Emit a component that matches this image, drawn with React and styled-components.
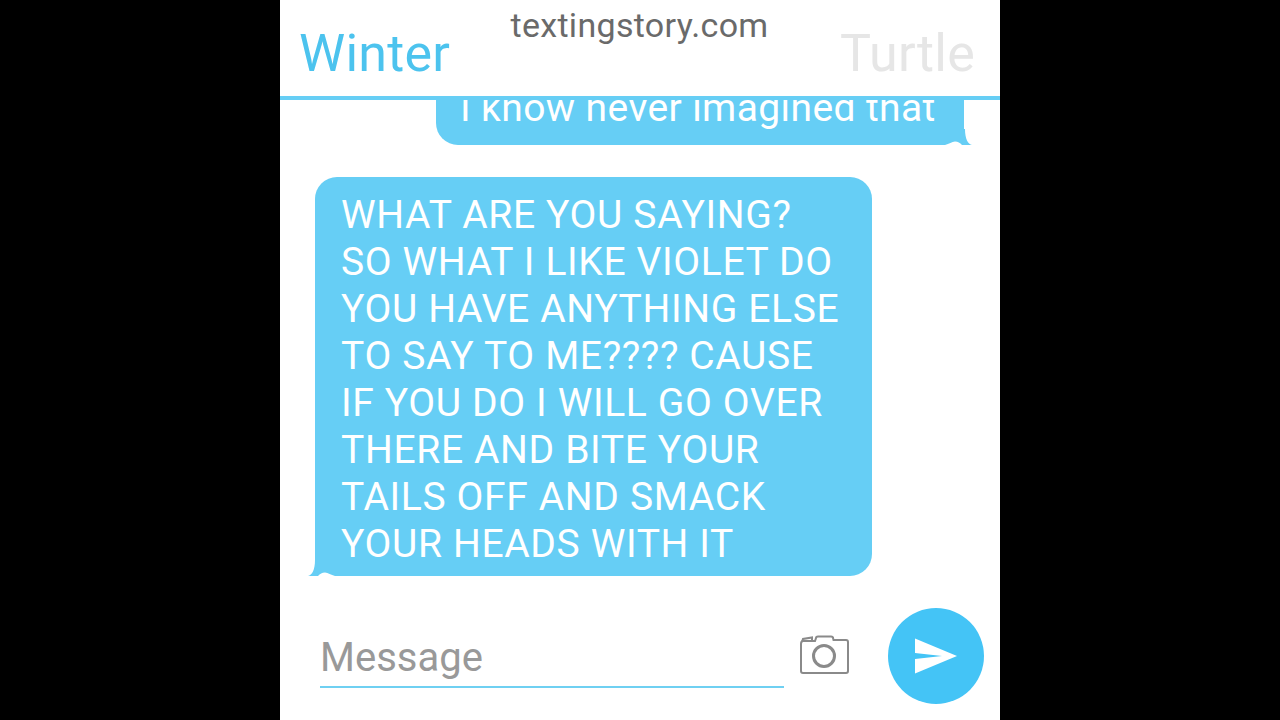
import React from 'react';
import styled, { createGlobalStyle } from 'styled-components';

const GlobalStyle = createGlobalStyle`
  html, body {
    margin: 0;
    padding: 0;
    height: 100%;
    background: #000;
    font-family: Roboto, "Liberation Sans", sans-serif;
  }
`;

const Stage = styled.div`
  display: flex;
  justify-content: center;
  height: 720px;
  background: #000;
`;

const Phone = styled.div`
  position: relative;
  display: flex;
  flex-direction: column;
  width: 720px;
  height: 720px;
  background: #fff;
  overflow: hidden;
`;

const Watermark = styled.div`
  position: absolute;
  top: 6px;
  left: 0;
  right: 1px;
  text-align: center;
  font-size: 34px;
  line-height: 38px;
  letter-spacing: 0.3px;
  color: #6a6a6a;
`;

const Header = styled.header`
  display: flex;
  justify-content: space-between;
  align-items: flex-start;
  flex: none;
  height: 96px;
  padding: 0 25px 0 19px;
  border-bottom: 4px solid #66cef5;
`;

const Tab = styled.div`
  font-size: 52px;
  line-height: 60px;
  letter-spacing: 0.25px;
  margin-top: 24px;
  color: ${(p) => (p.$active ? '#4cc3ee' : '#e6e6e6')};
`;

const Thread = styled.main`
  display: flex;
  flex-direction: column;
  justify-content: flex-end;
  gap: 32px;
  flex: 1;
  min-height: 0;
  overflow: hidden;
  padding: 0 36px 24px 35px;
`;

const Bubble = styled.div`
  position: relative;
  flex: none;
  align-self: ${(p) => (p.$mine ? 'flex-end' : 'flex-start')};
  width: ${(p) => (p.$mine ? '528px' : '557px')};
  box-sizing: border-box;
  padding: ${(p) => (p.$mine ? '13px 20px 13px 24px' : '15px 20px 8px 26px')};
  background: #66cef5;
  border-radius: ${(p) => (p.$mine ? '22px 22px 0 22px' : '22px 22px 22px 0')};
  font-size: 39px;
  line-height: 47px;
  letter-spacing: ${(p) => (p.$mine ? '0.4px' : '0.65px')};
  color: #fff;
  white-space: pre-line;
`;

const TailMark = styled.svg`
  position: absolute;
  bottom: 0;
  width: 30px;
  height: 20px;
  ${(p) => (p.$mine ? 'right: -8px; transform: scaleX(-1);' : 'left: -7px;')}
`;

const Tail = ({ mine }) => (
  <TailMark $mine={mine} viewBox="0 0 30 20">
    <path d="M10 20 C12 18 14 16.500 17 16.500 C20 17 23 19 27 20 Z" fill="#fff" />
    <path d="M0 20 C4 19 7 14 7 4 L9 4 L9 16 C9 18 10 19 10 20 Z" fill="#66cef5" />
  </TailMark>
);

const Composer = styled.footer`
  display: flex;
  align-items: flex-end;
  flex: none;
  height: 120px;
  box-sizing: border-box;
  padding: 0 16px 16px 40px;
`;

const MessageField = styled.div`
  width: 464px;
  height: 64px;
  margin-bottom: 16px;
  box-sizing: border-box;
  border-bottom: 2px solid #6fd0f2;
  font-size: 40px;
  line-height: 67px;
  color: #999;
`;

const CameraIcon = styled.svg`
  flex: none;
  width: 50px;
  height: 40px;
  margin: 0 39px 30px 15px;
`;

const SendButton = styled.div`
  display: flex;
  align-items: center;
  justify-content: center;
  flex: none;
  width: 96px;
  height: 96px;
  border-radius: 50%;
  background: #44c4f6;
`;

export default function App() {
  return (
    <>
      <GlobalStyle />
      <Stage>
        <Phone>
          <Header>
            <Tab $active>Winter</Tab>
            <Tab>Turtle</Tab>
          </Header>
          <Watermark>textingstory.com</Watermark>
          <Thread>
            <Bubble $mine>
              I know never imagined that
              <Tail mine />
            </Bubble>
            <Bubble>
              {'WHAT ARE YOU SAYING?\nSO WHAT I LIKE VIOLET DO\nYOU HAVE ANYTHING ELSE\nTO SAY TO ME???? CAUSE\nIF YOU DO I WILL GO OVER\nTHERE AND BITE YOUR\nTAILS OFF AND SMACK\nYOUR HEADS WITH IT'}
              <Tail />
            </Bubble>
          </Thread>
          <Composer>
            <MessageField>Message</MessageField>
            <CameraIcon viewBox="0 0 50 40" fill="none" stroke="#8a8a8a" strokeWidth="2">
              <path d="M2 10 C2 8 3 7 4 7 L16 7 L17 4 C17 3 18 2.500 19 2.500 L32 2.500 C33 2.500 34 3 34 4 L34.500 6 L47 6 C48.500 6 49 7 49 8 L49 37 C49 38.500 48.500 39 47 39 L4 39 C2.500 39 2 38.500 2 37 Z" />
              <path d="M3 8 L4 5 L13 3.500 L13 7" />
              <circle cx="25" cy="22" r="10.500" strokeWidth="3" />
            </CameraIcon>
            <SendButton>
              <svg width="44" height="38" viewBox="0 0 44 38">
                <path d="M1 1.500 L43 19 L28 19 L1 16 Z" fill="#fff" />
                <path d="M1 36.500 L43 19 L28 19 L1 22 Z" fill="#fff" />
              </svg>
            </SendButton>
          </Composer>
        </Phone>
      </Stage>
    </>
  );
}
